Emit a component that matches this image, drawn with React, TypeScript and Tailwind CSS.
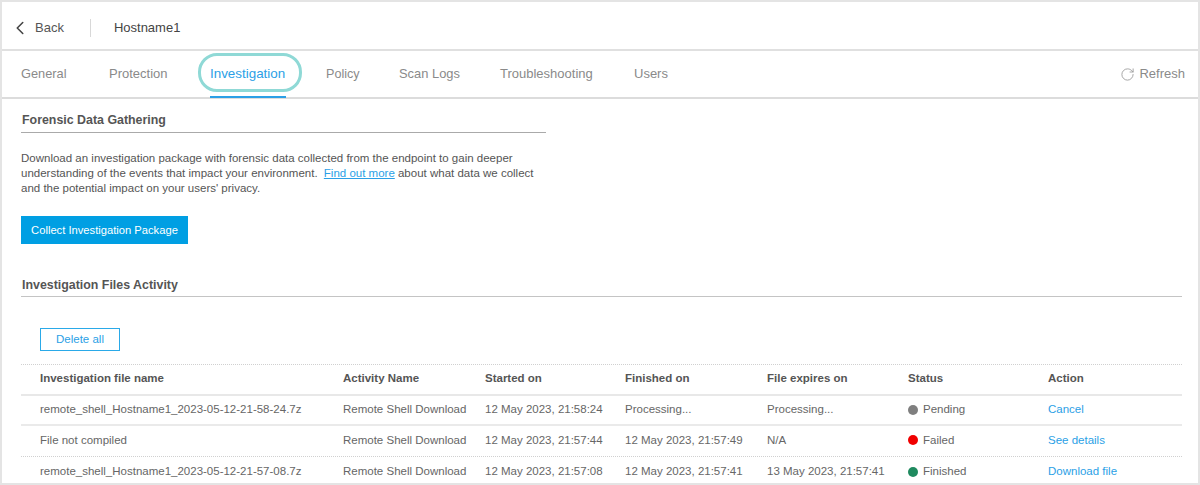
import { ChevronLeft, RotateCw } from 'lucide-react'

const tabs = [
  { label: 'General', width: 'w-[88px] text-[12.8px]' },
  { label: 'Protection', width: 'w-[101px] text-[13px]' },
  { label: 'Investigation', width: 'w-[116px] text-[13.4px]' },
  { label: 'Policy', width: 'w-[73px] text-[12.6px]' },
  { label: 'Scan Logs', width: 'w-[101px] text-[12.9px]' },
  { label: 'Troubleshooting', width: 'w-[134px] text-[13px]' },
  { label: 'Users', width: 'w-[50px] text-[13px]' },
]

const rows = [
  {
    name: 'remote_shell_Hostname1_2023-05-12-21-58-24.7z',
    started: '12 May 2023, 21:58:24',
    finished: 'Processing...',
    expires: 'Processing...',
    status: 'Pending',
    dot: 'bg-[#7f7f7f]',
    action: 'Cancel',
    rowClass: 'h-[30px] pt-px border-b-2 border-[#eaeaea]',
  },
  {
    name: 'File not compiled',
    started: '12 May 2023, 21:57:44',
    finished: '12 May 2023, 21:57:49',
    expires: 'N/A',
    status: 'Failed',
    dot: 'bg-[#f00000]',
    action: 'See details',
    rowClass: 'h-[31px] border-b border-dotted border-[#d0d0d0]',
  },
  {
    name: 'remote_shell_Hostname1_2023-05-12-21-57-08.7z',
    started: '12 May 2023, 21:57:08',
    finished: '12 May 2023, 21:57:41',
    expires: '13 May 2023, 21:57:41',
    status: 'Finished',
    dot: 'bg-[#1f8a5f]',
    action: 'Download file',
    rowClass: 'h-[29px] pt-[2px]',
  },
]

const grid = 'grid grid-cols-[303px_142px_140px_142px_141px_140px_1fr] pl-[19px] items-center'

export default function App() {
  return (
    <div className="h-[485px] w-[1200px] overflow-hidden border-2 border-[#e4e4e4] bg-white font-['Liberation_Sans',Arial,sans-serif] text-[#666]">
      {/* Top bar */}
      <div className="flex h-[49px] items-center border-b-2 border-[#e0e0e0] pl-[7px] pt-[5px]">
        <ChevronLeft className="h-[22px] w-[22px] text-[#444]" strokeWidth={1.7} />
        <span className="ml-[4px] text-[13px] text-[#555]">Back</span>
        <div className="ml-[26px] h-[18px] w-px bg-[#d8d8d8]" />
        <span className="ml-[23px] text-[13px] text-[#444]">Hostname1</span>
      </div>

      {/* Tabs */}
      <div className="flex h-[48px] items-center border-b-2 border-[#dcdcdc] pl-[19px] pr-[13px]">
        {tabs.map(tab => (
          <div
            key={tab.label}
            className={`${tab.width} relative flex h-full items-center ${
              tab.label === 'Investigation' ? 'text-[#2b9fe6]' : 'text-[#8a8a8a]'
            }`}
          >
            {tab.label}
            {tab.label === 'Investigation' && (
              <>
                <div className="absolute -bottom-[1px] left-0 h-[2px] w-[76px] bg-[#2b9fe6]" />
                <div className="absolute -left-[12px] top-[2px] h-[39px] w-[104px] rounded-[19px] border-[3px] border-[#8fd9d6]" />
              </>
            )}
          </div>
        ))}
        <div className="ml-auto flex items-center gap-[4px] text-[13px] text-[#8a8a8a]">
          <RotateCw className="h-[15px] w-[15px] text-[#999]" strokeWidth={1.4} />
          Refresh
        </div>
      </div>

      {/* Forensic section */}
      <div className="pl-[19px]">
        <div className="h-[34px] w-[525px] border-b border-[#aaa] pl-px pt-[14px] text-[12.4px] font-bold leading-[15px] text-[#555]">
          Forensic Data Gathering
        </div>
        <p className="mt-[18px] w-[525px] text-[11.5px] leading-[15.2px] text-[#555]">
          Download an investigation package with forensic data collected from the endpoint to gain deeper understanding
          of the events that impact your environment.{' '}
          <a className="ml-[3px] text-[#2b9fe6] underline">Find out more</a> about what data we collect and the
          potential impact on your users' privacy.
        </p>
        <button className="mt-[19px] flex h-[28px] w-[167px] items-center justify-center bg-[#009fe3] pt-px text-[11.2px] font-medium text-white">
          Collect Investigation Package
        </button>
      </div>

      {/* Activity section */}
      <div className="mt-[29px] pl-[19px] pr-[16px]">
        <div className="flex h-[24px] items-center border-b border-[#c4c4c4] pl-px pt-[2px] text-[12.4px] font-bold text-[#555]">
          Investigation Files Activity
        </div>
        <div className="ml-[19px] mt-[31px]">
          <button className="flex h-[23px] w-[80px] items-center justify-center border border-[#2aa9e8] pt-px text-[11.5px] text-[#2b9fe6]">
            Delete all
          </button>
        </div>
        <div className="mt-[13px] border-t border-dotted border-[#d0d0d0]">
          <div className={`${grid} h-[31px] border-b-2 border-[#e8e8e8] text-[11.5px] font-bold text-[#555]`}>
            <div>Investigation file name</div>
            <div>Activity Name</div>
            <div>Started on</div>
            <div>Finished on</div>
            <div>File expires on</div>
            <div>Status</div>
            <div>Action</div>
          </div>
          {rows.map(row => (
            <div key={row.name} className={`${grid} ${row.rowClass} text-[11.5px] text-[#666]`}>
              <div>{row.name}</div>
              <div>Remote Shell Download</div>
              <div>{row.started}</div>
              <div>{row.finished}</div>
              <div>{row.expires}</div>
              <div className="flex items-center gap-[5px]">
                <span className={`mb-px h-[10px] w-[10px] rounded-full ${row.dot}`} />
                {row.status}
              </div>
              <a className="text-[#2b9fe6]">{row.action}</a>
            </div>
          ))}
        </div>
      </div>
    </div>
  )
}
